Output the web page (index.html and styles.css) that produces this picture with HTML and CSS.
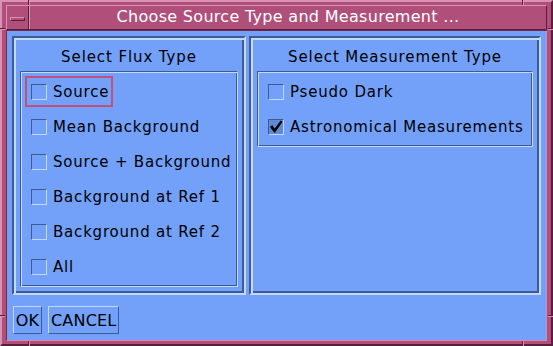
FILE: index.html
```html
<!DOCTYPE html>
<html lang="en">
<head>
    <meta charset="UTF-8">
    <title>Choose Source Type and Measurement</title>
    <link rel="stylesheet" href="styles.css">
</head>
<body>
    <div class="window">
        <!-- resize handle marks on the frame -->
        <span class="notch v top left"></span>
        <span class="notch v top right"></span>
        <span class="notch v bottom left"></span>
        <span class="notch v bottom right"></span>
        <span class="notch h side-l upper"></span>
        <span class="notch h side-r upper"></span>
        <span class="notch h side-l lower"></span>
        <span class="notch h side-r lower"></span>

        <div class="titlebar">
            <div class="menu-btn"><span class="dash"></span></div>
            <div class="title">Choose Source Type and Measurement ...</div>
        </div>

        <div class="client">
            <div class="panels">
                <section class="panel flux">
                    <h2>Select Flux Type</h2>
                    <div class="options">
                        <label class="option focus"><span class="box"></span>Source</label>
                        <label class="option"><span class="box"></span>Mean Background</label>
                        <label class="option"><span class="box"></span>Source + Background</label>
                        <label class="option"><span class="box"></span>Background at Ref 1</label>
                        <label class="option"><span class="box"></span>Background at Ref 2</label>
                        <label class="option"><span class="box"></span>All</label>
                    </div>
                </section>
                <section class="panel measure">
                    <h2>Select Measurement Type</h2>
                    <div class="options">
                        <label class="option"><span class="box"></span>Pseudo Dark</label>
                        <label class="option"><span class="box checked"><svg width="15" height="15" viewBox="0 0 15 15"><path d="M1 8 L3.5 6 L6 10 L12.5 1 L14.5 2.5 L6.5 14 L5.5 14 Z" fill="#000"/></svg></span>Astronomical Measurements</label>
                    </div>
                </section>
            </div>
            <div class="actions">
                <button class="ok">OK</button>
                <button>CANCEL</button>
            </div>
        </div>
    </div>
</body>
</html>
```

FILE: styles.css
```css
* {
    box-sizing: border-box;
    margin: 0;
    padding: 0;
}

body {
    width: 553px;
    height: 346px;
    overflow: hidden;
    font-family: 'DejaVu Sans', sans-serif;
    font-size: 15px;
    color: #000;
    background-color: #b0507a;
}

.window {
    position: relative;
    width: 553px;
    height: 346px;
    display: flex;
    flex-direction: column;
    background-color: #b0507a;
    border: 2px solid;
    border-color: #da92b3 #5a1d3a #5a1d3a #da92b3;
    padding: 3px 4px 3px 4px;
}

.notch {
    position: absolute;
    background-color: #5a1d3a;
}

.notch.v {
    width: 2px;
    height: 5px;
    border-right: 1px solid #da92b3;
}

.notch.v.top { top: -2px; }
.notch.v.bottom { bottom: -2px; }
.notch.v.left { left: 26px; }
.notch.v.right { right: 27px; }

.notch.h {
    width: 5px;
    height: 2px;
    border-bottom: 1px solid #da92b3;
}

.notch.h.side-l { left: -2px; }
.notch.h.side-r { right: -2px; }
.notch.h.upper { top: 26px; }
.notch.h.lower { bottom: 27px; }

.titlebar {
    display: flex;
    height: 25px;
    border: 1px solid;
    border-color: #da92b3 #5a1d3a #5a1d3a #da92b3;
}

.menu-btn {
    width: 22px;
    border-right: 1px solid #5a1d3a;
    display: flex;
    align-items: center;
    justify-content: center;
}

.menu-btn .dash {
    width: 15px;
    height: 4px;
    border: 1px solid;
    border-color: #da92b3 #5a1d3a #5a1d3a #da92b3;
    margin-top: 2px;
}

.title {
    flex: 1;
    border-left: 1px solid #da92b3;
    color: #fff;
    font-size: 16px;
    text-align: center;
    line-height: 22px;
    letter-spacing: 0.3px;
}

.client {
    flex: 1;
    display: flex;
    flex-direction: column;
    background-color: #73a1fa;
    border: 1px solid;
    border-color: #6d2848 #d88aae #d88aae #6d2848;
    padding: 5px 5px 6px 5px;
}

.panels {
    display: flex;
    gap: 3px;
    height: 259px;
}

.panel {
    display: flex;
    flex-direction: column;
    border: 2px solid;
    border-color: #3d5b95 #c4d7fc #c4d7fc #3d5b95;
    box-shadow: inset 2px 2px 0 #c4d7fc, inset -2px -2px 0 #3d5b95;
    padding: 2px 6px 6px 6px;
}

.panel.flux {
    width: 234px;
}

.panel.measure {
    flex: 1;
}

.panel h2 {
    flex: none;
    font-size: 15px;
    font-weight: normal;
    text-align: center;
    height: 31px;
    padding-top: 4px;
    line-height: 27px;
    letter-spacing: 0.9px;
}

.options {
    border: 1px solid;
    border-color: #3d5b95 #c4d7fc #c4d7fc #3d5b95;
    box-shadow: inset 1px 1px 0 #c4d7fc, inset -1px -1px 0 #3d5b95;
    padding: 4px 2px 0 4px;
    display: flex;
    flex-direction: column;
}

.panel.flux .options {
    flex: 1;
}

.option {
    display: flex;
    align-items: center;
    align-self: flex-start;
    gap: 6px;
    height: 31px;
    margin: 0 0 4px 0;
    padding: 0 2px 0 4px;
    border: 2px solid transparent;
    letter-spacing: 0.8px;
    white-space: nowrap;
}

.option.focus {
    border-color: #c2507d;
}

.box {
    width: 16px;
    height: 16px;
    flex: none;
    border: 1px solid;
    border-color: #3d5b95 #c4d7fc #c4d7fc #3d5b95;
    display: flex;
    align-items: center;
    justify-content: center;
}

.box.checked {
    background-color: #5f8ad6;
}

.actions {
    display: flex;
    gap: 6px;
    margin-top: 11px;
    padding-left: 1px;
}

.actions button {
    height: 28px;
    font-family: 'DejaVu Sans', sans-serif;
    font-size: 16px;
    color: #000;
    background-color: #73a1fa;
    border: 1px solid;
    border-color: #c4d7fc #3d5b95 #3d5b95 #c4d7fc;
    padding: 0 2px;
    letter-spacing: 0.2px;
}

.actions button.ok {
    width: 29px;
    padding: 0;
}
```
